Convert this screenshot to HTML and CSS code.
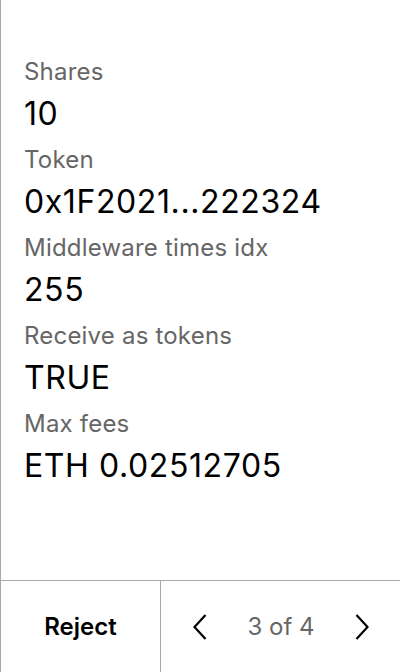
FILE: index.html
```html
<!DOCTYPE html>
<html>
<head>
<meta charset="utf-8">
<link rel="stylesheet" href="styles.css">
</head>
<body>
<div class="screen">
  <div class="content">
    <div class="label">Shares</div>
    <div class="value">10</div>
    <div class="label">Token</div>
    <div class="value">0x1F2021...222324</div>
    <div class="label">Middleware times idx</div>
    <div class="value">255</div>
    <div class="label">Receive as tokens</div>
    <div class="value">TRUE</div>
    <div class="label">Max fees</div>
    <div class="value">ETH 0.02512705</div>
  </div>
  <div class="footer">
    <div class="reject">Reject</div>
    <div class="pager">
      <svg class="chev" width="14" height="26" viewBox="0 0 14 26"><path d="M12.5 1 L1.5 13 L12.5 25" fill="none" stroke="#000" stroke-width="2.2"/></svg>
      <span class="count">3 of 4</span>
      <svg class="chev" width="14" height="26" viewBox="0 0 14 26"><path d="M1.5 1 L12.5 13 L1.5 25" fill="none" stroke="#000" stroke-width="2.2"/></svg>
    </div>
  </div>
</div>
</body>
</html>
```
FILE: styles.css
```css
html, body {
  margin: 0;
  padding: 0;
  background: #fff;
}
.screen {
  width: 400px;
  height: 672px;
  box-sizing: border-box;
  border-left: 1px solid #a8a8a8;
  display: flex;
  flex-direction: column;
  font-family: Inter, "Noto Sans", sans-serif;
}
.content {
  flex: 1;
  padding: 46px 0 0 23px;
}
.label {
  font-size: 24px;
  line-height: 28px;
  letter-spacing: 0.2px;
  color: #666;
  margin-top: 12px;
}
.value {
  font-size: 32px;
  line-height: 40px;
  letter-spacing: 0.6px;
  color: #000;
  margin-top: 8px;
}
.footer {
  height: 92px;
  box-sizing: border-box;
  border-top: 1px solid #a8a8a8;
  display: flex;
}
.reject {
  width: 159px;
  border-right: 1px solid #a8a8a8;
  display: flex;
  align-items: center;
  justify-content: center;
  font-size: 24px;
  font-weight: 600;
  color: #000;
}
.pager {
  flex: 1;
  display: flex;
  align-items: center;
  justify-content: space-between;
  padding: 0 31px 0 32px;
}
.count {
  font-size: 24px;
  color: #666;
}
.chev {
  display: block;
}
```
